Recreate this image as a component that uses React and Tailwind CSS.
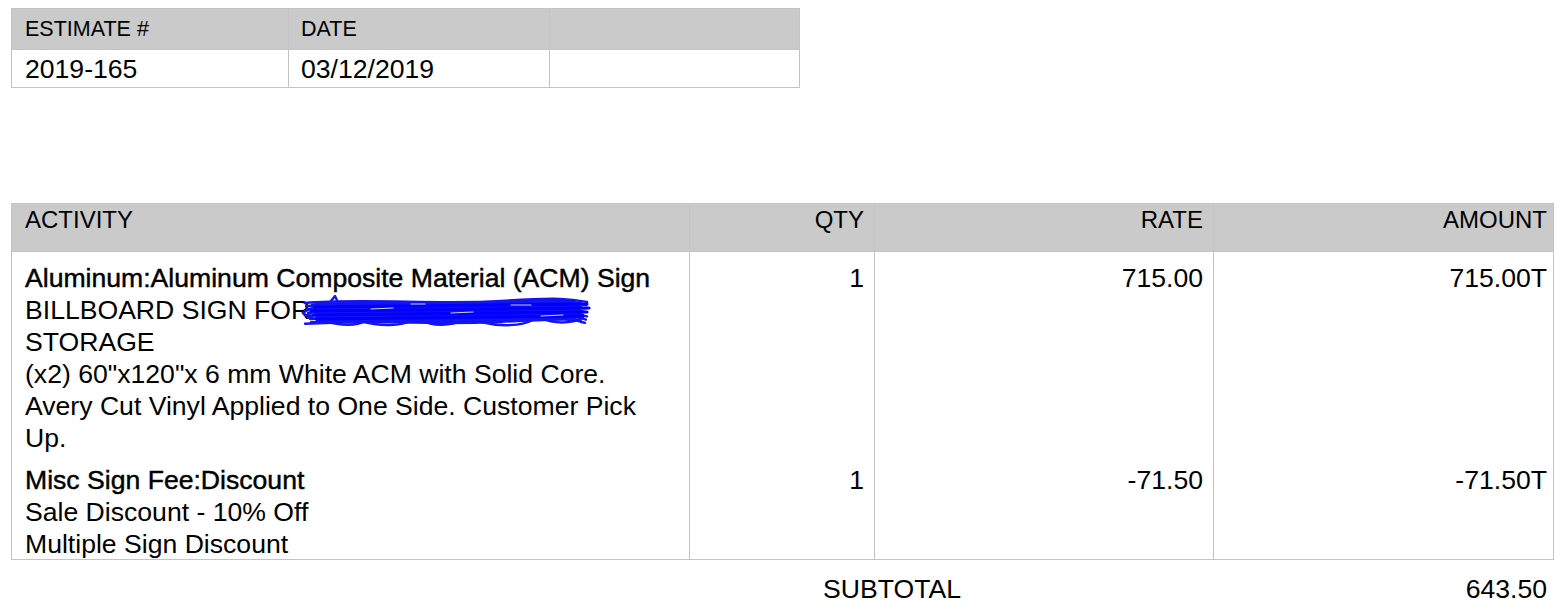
export default function App() {
  const font = { fontFamily: '"Liberation Sans", Arial, Helvetica, sans-serif' };
  const semi = { WebkitTextStroke: '0.45px black' };
  const lines = [];
  for (let i = 0; i < 14; i++) {
    const y = 6 + i * 1.6;
    const x0 = 4 + ((i * 7) % 13);
    const x1 = 286 - ((i * 5) % 9);
    lines.push(
      <path
        key={i}
        d={`M${x0} ${y + 2} C${60 + i * 3} ${y - 3} ${140 - i * 2} ${y + 4} ${200} ${y} S${270} ${y - 2} ${x1} ${y + 1}`}
      />
    );
  }
  return (
    <div className="w-[1566px] h-[611px] bg-white text-black overflow-hidden" style={font}>
      <div className="pt-[8px] pl-[11px]">
        <table className="border-collapse w-[788px] table-fixed">
          <colgroup>
            <col className="w-[277px]" />
            <col className="w-[261px]" />
            <col className="w-[250px]" />
          </colgroup>
          <thead>
            <tr className="bg-[#cacaca] h-[41px] text-[21.5px] leading-[24px]">
              <th className="border border-[#c4c4c4] text-left font-normal px-[13px] align-middle">ESTIMATE #</th>
              <th className="border border-[#c4c4c4] text-left font-normal px-[12px] align-middle">DATE</th>
              <th className="border border-[#c4c4c4]"></th>
            </tr>
          </thead>
          <tbody>
            <tr className="h-[38px] text-[26.6px] leading-[30px]">
              <td className="border border-[#c4c4c4] px-[13px] align-middle">2019-165</td>
              <td className="border border-[#c4c4c4] px-[12px] align-middle">03/12/2019</td>
              <td className="border border-[#c4c4c4]"></td>
            </tr>
          </tbody>
        </table>

        <table className="border-collapse w-[1542px] table-fixed mt-[115px]">
          <colgroup>
            <col className="w-[678px]" />
            <col className="w-[185px]" />
            <col className="w-[339px]" />
            <col className="w-[340px]" />
          </colgroup>
          <thead>
            <tr className="bg-[#cacaca] h-[48px] text-[24px] leading-[26px]">
              <th className="border border-[#c4c4c4] text-left font-normal px-[13px] align-top pt-[3px]">ACTIVITY</th>
              <th className="border border-[#c4c4c4] text-right font-normal px-[10px] align-top pt-[3px]">QTY</th>
              <th className="border border-[#c4c4c4] text-right font-normal px-[10px] align-top pt-[3px]">RATE</th>
              <th className="border border-[#c4c4c4] text-right font-normal px-[6px] align-top pt-[3px]">AMOUNT</th>
            </tr>
          </thead>
          <tbody className="text-[26.6px] leading-[32px]">
            <tr>
              <td className="border-l border-r border-[#c4c4c4] px-[13px] pt-[10px] align-top">
                <div style={semi}>Aluminum:Aluminum Composite Material (ACM) Sign</div>
                <div className="relative">
                  BILLBOARD SIGN FOR
                  <svg className="absolute left-[276px] top-[1px]" width="300" height="34" viewBox="0 0 300 34" fill="none">
                    <g stroke="#1414f2" strokeWidth="2.4" strokeLinecap="round">
                      {lines}
                      <path d="M2 18 C10 11 22 11 28 18 C22 27 10 25 2 18" />
                      <path d="M6 20 C14 14 26 15 30 21" />
                      <path d="M30 6 L34 1 L38 10" />
                      <path d="M60 26 C80 32 100 31 112 25" />
                      <path d="M120 25 C132 32 150 31 162 25" />
                      <path d="M180 27 C200 32 220 31 232 25" />
                      <path d="M240 23 C252 29 270 29 282 23" />
                      <path d="M24 26 C40 31 56 31 64 26" />
                    </g>
                    <g stroke="#0000ff" strokeWidth="3.2" strokeLinecap="round">
                      <path d="M14 12 L286 9" />
                      <path d="M10 16 L288 13" />
                      <path d="M12 20 L286 17" />
                      <path d="M16 24 L282 21" />
                    </g>
                    <g stroke="#ffffff" strokeWidth="1.2" strokeLinecap="round" opacity="0.8">
                      <path d="M70 14 L92 13" />
                      <path d="M150 18 L172 17" />
                      <path d="M210 10 L230 10" />
                      <path d="M240 21 L262 20" />
                      <path d="M110 9 L124 9" />
                    </g>
                  </svg>
                </div>
                <div>STORAGE</div>
                <div>(x2) 60"x120"x 6 mm White ACM with Solid Core.</div>
                <div>Avery Cut Vinyl Applied to One Side. Customer Pick</div>
                <div>Up.</div>
              </td>
              <td className="border-l border-r border-[#c4c4c4] px-[10px] pt-[10px] align-top text-right">1</td>
              <td className="border-l border-r border-[#c4c4c4] px-[10px] pt-[10px] align-top text-right">715.00</td>
              <td className="border-l border-r border-[#c4c4c4] px-[6px] pt-[10px] align-top text-right">715.00T</td>
            </tr>
            <tr className="border-b border-[#c4c4c4]">
              <td className="border-l border-r border-[#c4c4c4] px-[13px] pt-[10px] align-top">
                <div style={semi}>Misc Sign Fee:Discount</div>
                <div>Sale Discount - 10% Off</div>
                <div className="-mb-[1px]">Multiple Sign Discount</div>
              </td>
              <td className="border-l border-r border-[#c4c4c4] px-[10px] pt-[10px] align-top text-right">1</td>
              <td className="border-l border-r border-[#c4c4c4] px-[10px] pt-[10px] align-top text-right">-71.50</td>
              <td className="border-l border-r border-[#c4c4c4] px-[6px] pt-[10px] align-top text-right">-71.50T</td>
            </tr>
          </tbody>
        </table>

        <div className="flex w-[1542px] text-[26.6px] leading-[32px] pt-[13px]">
          <div className="ml-[812px]">SUBTOTAL</div>
          <div className="ml-auto pr-[6px]">643.50</div>
        </div>
      </div>
    </div>
  );
}
